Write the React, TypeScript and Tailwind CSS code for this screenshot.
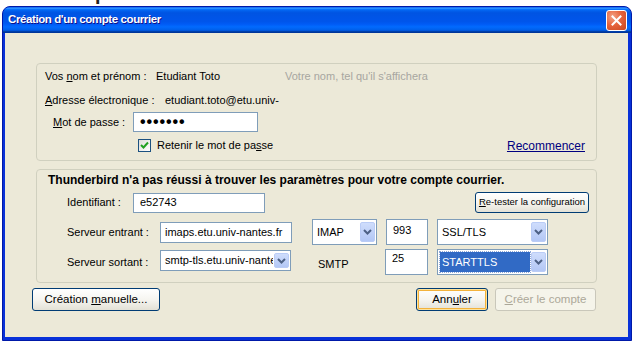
import React from "react";

type BoxProps = {
  value: string;
  className?: string;
  top?: boolean;
};

function TextBox({ value, className = "", top = false }: BoxProps) {
  return (
    <div
      className={`flex shrink-0 border border-[#7F9DB9] bg-white px-[6px] text-[11px] leading-[13px] text-black ${
        top ? "items-start pt-[4px]" : "items-center"
      } ${className}`}
    >
      {value}
    </div>
  );
}

function Chevron() {
  return (
    <svg width="9" height="6" viewBox="0 0 9 6">
      <path d="M1 1 L4.5 4.5 L8 1" fill="none" stroke="#4D6185" strokeWidth="2" />
    </svg>
  );
}

function Combo({
  value,
  className = "",
  selected = false,
}: {
  value: string;
  className?: string;
  selected?: boolean;
}) {
  return (
    <div className={`flex shrink-0 items-stretch border border-[#7F9DB9] bg-white p-[1px] ${className}`}>
      <div className="flex flex-1 items-stretch overflow-hidden p-[1px]">
        <div
          className={`flex flex-1 items-center overflow-hidden whitespace-nowrap pl-[2px] text-[11px] ${
            selected ? "bg-[#316AC5] text-white outline outline-1 outline-dotted outline-[#8FA8D8]" : "text-black"
          }`}
        >
          {value}
        </div>
      </div>
      <div className="my-[1px] flex w-[15px] items-center justify-center rounded-[2px] border border-[#BACCF6] bg-gradient-to-b from-[#CFDDFC] to-[#B3C7F5]">
        <Chevron />
      </div>
    </div>
  );
}

function XpButton({
  children,
  className = "",
  focused = false,
  disabled = false,
}: {
  children: React.ReactNode;
  className?: string;
  focused?: boolean;
  disabled?: boolean;
}) {
  const look = disabled
    ? "border-[#C9C7BA] bg-[#F5F4EA] text-[#ACA899]"
    : "border-[#003C74] bg-gradient-to-b from-white via-[#F6F5F0] to-[#E3E1D6] text-black";
  return (
    <div
      className={`flex shrink-0 items-center justify-center whitespace-nowrap rounded-[3px] border ${look} ${
        focused ? "shadow-[inset_0_0_0_1px_#FFE39A,inset_0_0_0_2px_#F3B23C]" : ""
      } ${className}`}
    >
      {children}
    </div>
  );
}

export default function App() {
  return (
    <div className="h-[344px] w-[635px] overflow-hidden bg-white font-['Liberation_Sans',Arial,sans-serif] text-[11px] text-black">
      {/* bits of the page behind the dialog */}
      <div className="h-[6px] overflow-hidden pl-[5px]">
        <div className="-mt-[17px] text-[20px] font-bold leading-[20px] text-[#222]">électronique</div>
      </div>

      <div className="ml-[2px] flex h-[335px] w-[630px] flex-col overflow-hidden rounded-t-[8px] border border-[#0019A8] bg-[#0831D9]">
        {/* Title bar */}
        <div className="flex h-[26px] shrink-0 items-center justify-between bg-[linear-gradient(to_bottom,#0058EE_0%,#3593FF_4%,#288EFF_6%,#127DFF_8%,#036FFC_10%,#0262EE_14%,#0057E5_20%,#0054E3_24%,#0055EB_56%,#005BF5_66%,#026AFE_76%,#0062EF_86%,#0052D6_92%,#0040AB_94%,#003092_100%)] pl-[5px] pr-[4px]">
          <span className="text-[11.5px] font-bold tracking-[-0.4px] text-white [text-shadow:1px_1px_#0F1089]">
            Création d'un compte courrier
          </span>
          <div className="flex h-[21px] w-[21px] items-center justify-center rounded-[3px] border border-white bg-[radial-gradient(circle_at_30%_30%,#F3A386_0%,#E6643D_45%,#C9461F_100%)]">
            <svg width="11" height="11" viewBox="0 0 11 11">
              <path d="M1.5 1.5 L9.5 9.5 M9.5 1.5 L1.5 9.5" stroke="white" strokeWidth="2" strokeLinecap="square" />
            </svg>
          </div>
        </div>

        {/* Body */}
        <div className="mb-[3px] ml-[2px] mr-[3px] flex flex-1 flex-col bg-[#ECE9D8] pt-[30px]">
          {/* Group 1 */}
          <div className="ml-[31px] flex h-[98px] w-[561px] flex-col rounded-[4px] border border-[#D0D0BF] pt-[4px]">
            <div className="flex h-[16px] items-center pl-[8px]">
              <span className="w-[111px]">
                Vos <span className="underline">n</span>om et prénom :
              </span>
              <span className="w-[129px]">Etudiant Toto</span>
              <span className="text-[#A7A6A0]">Votre nom, tel qu'il s'affichera</span>
            </div>
            <div className="mt-[8px] flex h-[16px] items-center pl-[8px]">
              <span className="w-[120px]">
                <span className="underline">A</span>dresse électronique :
              </span>
              <span>etudiant.toto@etu.univ-</span>
            </div>
            <div className="mt-[4px] flex h-[20px] items-center pl-[16px]">
              <span className="w-[80px]">
                <span className="underline">M</span>ot de passe :
              </span>
              <div className="flex h-[20px] w-[125px] items-center border border-[#7F9DB9] bg-white pl-[6px]">
                <span className="text-[16px] font-bold leading-none tracking-[0.9px]">•••••••</span>
              </div>
            </div>
            <div className="mt-[7px] flex h-[13px] items-center pl-[101px] pr-[11px]">
              <div className="flex h-[13px] w-[13px] items-center justify-center border border-[#1C5180] bg-gradient-to-br from-[#DCDCD7] to-white">
                <svg width="9" height="9" viewBox="0 0 9 9">
                  <path d="M1 4 L3.5 6.5 L8 1.5" fill="none" stroke="#21A121" strokeWidth="2" />
                </svg>
              </div>
              <span className="ml-[6px]">
                Retenir le mot de pa<span className="underline">s</span>se
              </span>
              <span className="ml-auto text-[12px] text-[#000080] underline">Recommencer</span>
            </div>
          </div>

          {/* Group 2 */}
          <div className="ml-[31px] mt-[8px] flex h-[114px] w-[561px] flex-col rounded-[4px] border border-[#D0D0BF] pt-[3px]">
            <div className="flex h-[14px] items-center whitespace-nowrap pl-[11px] text-[12px] font-bold">
              Thunderbird n'a pas réussi à trouver les paramètres pour votre compte courrier.
            </div>
            <div className="mt-[5px] flex h-[21px] items-center pl-[30px] pr-[7px]">
              <span className="w-[66px]">Identifiant :</span>
              <TextBox value="e52743" className="h-[20px] w-[132px]" />
              <XpButton className="ml-auto h-[21px] w-[114px] text-[9.5px]">
                <span>
                  <span className="underline">R</span>e-tester la configuration
                </span>
              </XpButton>
            </div>
            <div className="mt-[6px] flex h-[26px] items-center pl-[30px]">
              <span className="w-[93px]">Serveur entrant :</span>
              <TextBox value="imaps.etu.univ-nantes.fr" className="h-[21px] w-[132px] !px-[4px]" />
              <Combo value="IMAP" className="ml-[20px] h-[26px] w-[65px]" />
              <TextBox value="993" top className="ml-[9px] h-[26px] w-[42px]" />
              <Combo value="SSL/TLS" className="ml-[9px] h-[26px] w-[111px]" />
            </div>
            <div className="mt-[4px] flex h-[26px] items-center pl-[30px]">
              <span className="w-[93px]">Serveur sortant :</span>
              <Combo value="smtp-tls.etu.univ-nantes.fr" className="mb-[3px] h-[21px] w-[131px]" />
              <span className="mt-[4px] w-[94px] pl-[27px]">SMTP</span>
              <TextBox value="25" top className="h-[26px] w-[43px] !pt-[2px]" />
              <Combo value="STARTTLS" selected className="ml-[9px] h-[26px] w-[111px]" />
            </div>
          </div>

          {/* Buttons */}
          <div className="ml-[27px] mr-[32px] mt-[5px] flex h-[23px] items-center text-[11.5px]">
            <XpButton className="h-[23px] w-[128px]">
              <span>
                Création <span className="underline">m</span>anuelle...
              </span>
            </XpButton>
            <XpButton focused className="ml-auto h-[23px] w-[72px]">
              <span>
                Ann<span className="underline">u</span>ler
              </span>
            </XpButton>
            <XpButton disabled className="ml-[7px] h-[23px] w-[101px]">
              <span>
                <span className="underline">C</span>réer le compte
              </span>
            </XpButton>
          </div>
        </div>
      </div>
    </div>
  );
}
